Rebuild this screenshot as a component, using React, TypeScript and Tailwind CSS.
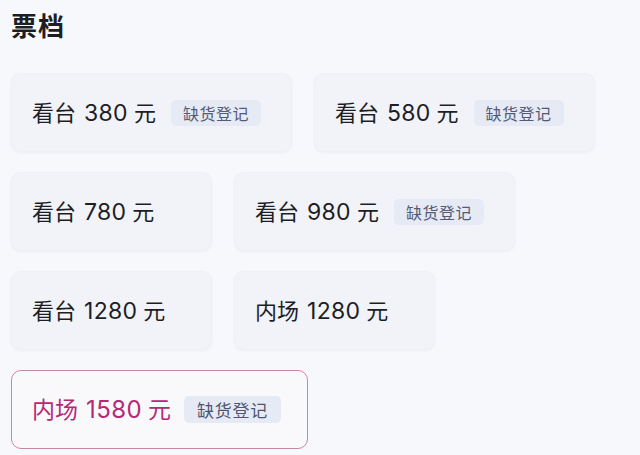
const tiers = [
  { name: '看台', price: 380, soldOut: true },
  { name: '看台', price: 580, soldOut: true },
  { name: '看台', price: 780, soldOut: false },
  { name: '看台', price: 980, soldOut: true },
  { name: '看台', price: 1280, soldOut: false },
  { name: '内场', price: 1280, soldOut: false },
  { name: '内场', price: 1580, soldOut: true, selected: true },
]

export default function App() {
  return (
    <div className="min-h-[455px] w-[640px] bg-[#f7f8fc] px-[11px] pt-[9px] font-['Noto_Sans_CJK_SC',sans-serif] text-[#1d1e24]">
      <h2 className="text-[26px] font-bold leading-[32px] tracking-[1px]">票档</h2>
      <div className="mt-[32px] flex flex-wrap gap-x-[22px] gap-y-[20px]">
        {tiers.map((t, i) => (
          <div
            key={i}
            className={
              t.selected
                ? 'flex h-[79px] min-w-[201px] items-center gap-[13px] rounded-[10px] border border-[#c48aa3] bg-[#f9f9fc] pl-[20px] pr-[26px]'
                : 'flex h-[79px] min-w-[201px] items-center gap-[15px] rounded-[10px] border border-[#eef0f5] bg-[#f1f3f8] pl-[20px] pr-[30px] shadow-[0_1px_3px_rgba(120,130,160,0.08)]'
            }
          >
            <span
              className={
                t.selected
                  ? 'flex items-baseline text-[23px] leading-none text-[#b52a76]'
                  : 'flex items-baseline text-[22px] leading-none text-[#1d1e24]'
              }
            >
              {t.name}
              <span
                className={
                  t.selected
                    ? "ml-[8px] mr-[6px] font-['Inter',sans-serif] text-[24px] tracking-[0.4px]"
                    : "ml-[8px] mr-[6px] font-['Inter',sans-serif] text-[23px] tracking-[0.3px]"
                }
              >
                {t.price}
              </span>
              元
            </span>
            {t.soldOut && (
              <span
                className={
                  t.selected
                    ? 'rounded-[5px] bg-[#e6eaf5] px-[13px] py-[3px] text-[17px] leading-[21px] tracking-[0.8px] text-[#4f5570]'
                    : 'rounded-[5px] bg-[#e6eaf5] px-[12px] py-[3px] text-[16px] leading-[20px] tracking-[0.5px] text-[#555b76]'
                }
              >
                缺货登记
              </span>
            )}
          </div>
        ))}
      </div>
    </div>
  )
}
